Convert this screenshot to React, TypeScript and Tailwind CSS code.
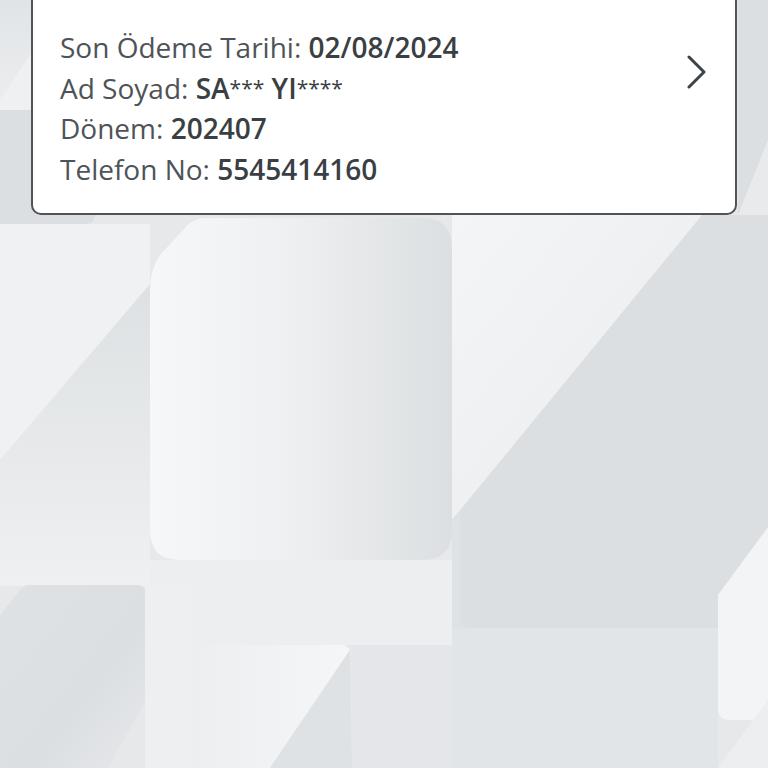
import React from 'react';

const rows = [
  { label: 'Son Ödeme Tarihi:', value: ['02/08/2024'] },
  { label: 'Ad Soyad:', value: ['SA', '***', ' YI', '****'] },
  { label: 'Dönem:', value: ['202407'] },
  { label: 'Telefon No:', value: ['5545414160'] },
];

const Backdrop: React.FC = () => (
  <svg className="absolute inset-0 w-full h-full" viewBox="0 0 768 768" preserveAspectRatio="none">
    <defs>
      <linearGradient id="bigRect" x1="0" y1="0" x2="1" y2="0">
        <stop offset="0" stopColor="#f6f7f8" />
        <stop offset="0.45" stopColor="#eef0f1" />
        <stop offset="1" stopColor="#dcdfe1" />
      </linearGradient>
      <linearGradient id="wedge" x1="0" y1="0" x2="0" y2="1">
        <stop offset="0" stopColor="#dee1e3" />
        <stop offset="1" stopColor="#eef0f1" />
      </linearGradient>
      <linearGradient id="band" x1="0" y1="0" x2="1" y2="1">
        <stop offset="0" stopColor="#f4f5f6" />
        <stop offset="0.7" stopColor="#eceef0" />
        <stop offset="1" stopColor="#dfe2e4" />
      </linearGradient>
      <linearGradient id="btmLeft" x1="0" y1="0" x2="1" y2="1">
        <stop offset="0" stopColor="#dfe2e4" />
        <stop offset="0.6" stopColor="#dcdfe2" />
        <stop offset="1" stopColor="#e6e8ea" />
      </linearGradient>
      <linearGradient id="btmMid" x1="0" y1="0" x2="1" y2="0">
        <stop offset="0" stopColor="#eceef0" />
        <stop offset="1" stopColor="#f5f6f7" />
      </linearGradient>
      <linearGradient id="topLeft" x1="0" y1="0" x2="0" y2="1">
        <stop offset="0" stopColor="#e1e4e6" />
        <stop offset="1" stopColor="#eceef0" />
      </linearGradient>
    </defs>
    <rect width="768" height="768" fill="#e6e8ea" />
    {/* top left, beside the card */}
    <rect x="0" y="0" width="32" height="110" fill="url(#topLeft)" />
    <polygon points="0,100 32,52 32,110 0,110" fill="#eef0f1" />
    <path d="M0 110 H95 V214 Q95 224 85 224 H0 Z" fill="#dcdfe1" />
    {/* left column */}
    <rect x="0" y="224" width="150" height="362" fill="#eff1f2" />
    <polygon points="150,284 150,586 0,586 0,460" fill="url(#wedge)" />
    {/* area right of the big rect */}
    <rect x="452" y="215" width="316" height="413" fill="#dcdfe2" />
    <polygon points="452,215 702,215 452,520" fill="url(#band)" />
    <path d="M452 520 L460 510 V616 Q460 628 472 628 H452 Z" fill="#dfe2e4" />
    <rect x="452" y="628" width="266" height="140" fill="#e2e5e7" />
    {/* big rounded rect */}
    <path d="M205 218 H422 Q452 218 452 248 V530 Q452 560 422 560 H180 Q150 560 150 530 V290 Q150 270 160 255 L185 228 Q193 218 205 218 Z" fill="url(#bigRect)" />
    {/* strip under the big rect */}
    <rect x="150" y="560" width="302" height="85" fill="#eceef0" />
    {/* bottom left */}
    <path d="M28 585 H137 Q145 585 145 593 V702 L108 768 H0 V615 L20 590 Q24 585 28 585 Z" fill="url(#btmLeft)" />
    <rect x="145" y="586" width="45" height="182" fill="#edeff1" />
    {/* bottom middle */}
    <path d="M190 645 H345 L350 650 L270 768 H190 Z" fill="url(#btmMid)" />
    <polygon points="350,650 352,768 270,768" fill="#dfe2e4" />
    <rect x="352" y="645" width="100" height="123" fill="#e4e6e9" />
    {/* bottom right */}
    <path d="M768 527 V720 H730 Q718 720 718 708 V595 Z" fill="#f3f4f6" />
    <polygon points="718,768 768,700 768,768" fill="#eceef0" />
    {/* right of card */}
    <rect x="738" y="0" width="30" height="215" fill="#dcdfe2" />
    <polygon points="738,215 768,140 768,215" fill="#e8eaec" />
  </svg>
);

export default function App() {
  return (
    <div className="relative w-full h-[768px] overflow-hidden" style={{ fontFamily: '"Open Sans", "Noto Sans", sans-serif' }}>
      <Backdrop />
      <div className="relative mx-[31px] bg-white border-2 border-t-0 border-[#4f5459] rounded-b-[10px] flex justify-between items-start pl-[27px] pr-[27px] pt-[27px] pb-[24px]">
        <div className="flex flex-col">
          {rows.map((r) => (
            <div key={r.label} className="text-[28px] leading-[40.5px] text-[#4e5358] whitespace-nowrap">
              {r.label}{' '}
              <span className="font-semibold text-[#3a3f44]">
                {r.value.map((part, i) =>
                  part.startsWith('*') ? (
                    <span key={i} className="text-[21px] font-normal align-[3px]">{part}</span>
                  ) : (
                    <React.Fragment key={i}>{part}</React.Fragment>
                  )
                )}
              </span>
            </div>
          ))}
        </div>
        <svg className="mt-[28px]" width="22" height="34" viewBox="0 0 22 34" fill="none">
          <path d="M3 2 L18 17 L3 32" stroke="#3e4348" strokeWidth="3" strokeLinecap="round" strokeLinejoin="round" />
        </svg>
      </div>
    </div>
  );
}
